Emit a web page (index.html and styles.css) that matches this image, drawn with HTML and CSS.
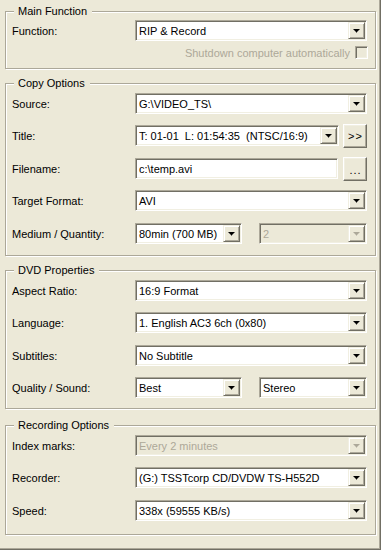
FILE: index.html
```html
<!DOCTYPE html>
<html>
<head>
<meta charset="utf-8">
<link rel="stylesheet" href="styles.css">
</head>
<body>
<div class="window">
  <section class="group g1">
    <span class="legend">Main Function</span>
    <div class="row">
      <span class="lbl">Function:</span>
      <div class="combo w-full"><span class="val">RIP &amp; Record</span><span class="dd"></span></div>
    </div>
    <div class="row check-row">
      <span class="dis-text">Shutdown computer automatically</span>
      <span class="checkbox"></span>
    </div>
  </section>

  <section class="group g2">
    <span class="legend">Copy Options</span>
    <div class="row">
      <span class="lbl">Source:</span>
      <div class="combo w-full"><span class="val">G:\VIDEO_TS\</span><span class="dd"></span></div>
    </div>
    <div class="row">
      <span class="lbl">Title:</span>
      <div class="combo w-short"><span class="val pre">T: 01-01  L: 01:54:35  (NTSC/16:9)</span><span class="dd"></span></div>
      <span class="pbtn">&gt;&gt;</span>
    </div>
    <div class="row">
      <span class="lbl">Filename:</span>
      <div class="combo edit w-edit"><span class="val">c:\temp.avi</span></div>
      <span class="pbtn dots">...</span>
    </div>
    <div class="row">
      <span class="lbl">Target Format:</span>
      <div class="combo w-full"><span class="val">AVI</span><span class="dd"></span></div>
    </div>
    <div class="row">
      <span class="lbl">Medium / Quantity:</span>
      <div class="combo w-half"><span class="val">80min (700 MB)</span><span class="dd"></span></div>
      <div class="combo w-half2 disabled"><span class="val">2</span><span class="dd"></span></div>
    </div>
  </section>

  <section class="group g3">
    <span class="legend">DVD Properties</span>
    <div class="row">
      <span class="lbl">Aspect Ratio:</span>
      <div class="combo w-full"><span class="val">16:9 Format</span><span class="dd"></span></div>
    </div>
    <div class="row">
      <span class="lbl">Language:</span>
      <div class="combo w-full"><span class="val">1. English AC3 6ch (0x80)</span><span class="dd"></span></div>
    </div>
    <div class="row">
      <span class="lbl">Subtitles:</span>
      <div class="combo w-full"><span class="val">No Subtitle</span><span class="dd"></span></div>
    </div>
    <div class="row">
      <span class="lbl">Quality / Sound:</span>
      <div class="combo w-half"><span class="val">Best</span><span class="dd"></span></div>
      <div class="combo w-half2"><span class="val">Stereo</span><span class="dd"></span></div>
    </div>
  </section>

  <section class="group g4">
    <span class="legend">Recording Options</span>
    <div class="row">
      <span class="lbl">Index marks:</span>
      <div class="combo w-full disabled"><span class="val">Every 2 minutes</span><span class="dd"></span></div>
    </div>
    <div class="row">
      <span class="lbl">Recorder:</span>
      <div class="combo w-full"><span class="val">(G:) TSSTcorp CD/DVDW TS-H552D</span><span class="dd"></span></div>
    </div>
    <div class="row">
      <span class="lbl">Speed:</span>
      <div class="combo w-full"><span class="val">338x (59555 KB/s)</span><span class="dd"></span></div>
    </div>
  </section>
</div>
</body>
</html>
```
FILE: styles.css
```css
html, body {
  margin: 0;
  padding: 0;
  background: #ece9d8;
}
body {
  font-family: "Liberation Sans", Arial, sans-serif;
  font-size: 11px;
  color: #000;
}
.window {
  box-sizing: border-box;
  width: 381px;
  height: 550px;
  padding: 11px 0 0 5px;
  border-right: 1px solid #716f64;
  border-bottom: 1px solid #716f64;
  box-shadow: inset -1px -1px 0 #aca899;
  overflow: hidden;
}
.group {
  position: relative;
  box-sizing: border-box;
  width: 371px;
  border: 1px solid #aca899;
  box-shadow: inset 1px 1px 0 #fff, 1px 1px 0 #fff;
  padding: 9px 7px 0 6px;
}
.g1 { padding-top: 8px; padding-bottom: 9px; }
.g2 { margin-top: 14px; padding-bottom: 11px; }
.g3 { margin-top: 14px; padding-bottom: 10px; }
.g4 { margin-top: 16px; padding-bottom: 13px; }
.legend {
  position: absolute;
  top: -7px;
  left: 8px;
  padding: 0 5px 0 4px;
  line-height: 13px;
  background: #ece9d8;
}
.row {
  display: flex;
  align-items: center;
  height: 21px;
  margin-top: 11px;
}
.row:first-of-type { margin-top: 0; }
.row:nth-of-type(3), .row:nth-of-type(5) { margin-top: 12px; }
.lbl {
  width: 123px;
  flex: none;
  white-space: nowrap;
}
.combo {
  box-sizing: border-box;
  height: 21px;
  flex: none;
  display: flex;
  align-items: center;
  padding: 1px;
  background: #fff;
  border: 1px solid;
  border-color: #aca899 #fff #fff #aca899;
  box-shadow: inset 1px 1px 0 #716f64, inset -1px -1px 0 #f1efe2;
}
.val {
  flex: 1;
  padding-left: 2px;
  white-space: nowrap;
  overflow: hidden;
}
.pre { white-space: pre; }
.w-full { width: 232px; }
.w-short { width: 204px; margin-right: 4px; }
.w-edit { width: 203px; margin-right: 5px; }
.w-half { width: 107px; margin-right: 17px; }
.w-half2 { width: 108px; }
.dd {
  box-sizing: border-box;
  width: 17px;
  height: 17px;
  flex: none;
  display: flex;
  align-items: center;
  justify-content: center;
  background: #ece9d8;
  border: 1px solid;
  border-color: #f1efe2 #716f64 #716f64 #f1efe2;
  box-shadow: inset 1px 1px 0 #fff, inset -1px -1px 0 #aca899;
}
.dd::after {
  content: "";
  width: 7px;
  height: 4px;
  background: #000;
  clip-path: polygon(0 0, 7px 0, 7px 1px, 6px 1px, 6px 2px, 5px 2px, 5px 3px, 4px 3px, 4px 4px, 3px 4px, 3px 3px, 2px 3px, 2px 2px, 1px 2px, 1px 1px, 0 1px);
}
.disabled {
  background: #ece9d8;
  color: #aca899;
}
.disabled .dd::after { background: #aca899; }
.pbtn {
  box-sizing: border-box;
  width: 24px;
  height: 24px;
  flex: none;
  display: flex;
  align-items: center;
  justify-content: center;
  background: #ece9d8;
  border: 1px solid;
  border-color: #fff #716f64 #716f64 #fff;
  box-shadow: inset -1px -1px 0 #aca899, inset 1px 1px 0 #f1efe2;
  letter-spacing: 1px;
  padding-left: 1px;
}
.dots { padding-top: 2px; }
.check-row {
  justify-content: flex-end;
  height: 13px;
  margin-top: 5px;
}
.dis-text {
  color: #aca899;
  margin-right: 5px;
  white-space: nowrap;
}
.checkbox {
  box-sizing: border-box;
  width: 13px;
  height: 13px;
  flex: none;
  border: 1px solid;
  border-color: #aca899 #fff #fff #aca899;
  box-shadow: inset 1px 1px 0 #716f64, inset -1px -1px 0 #f1efe2;
  background: #ece9d8;
}
```
